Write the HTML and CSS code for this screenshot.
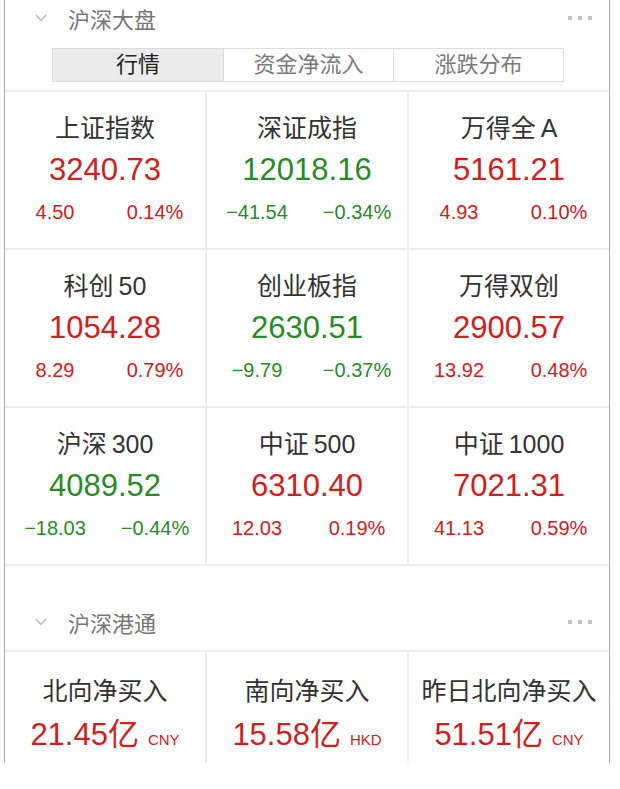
FILE: index.html
```html
<!DOCTYPE html>
<html lang="zh-CN">

<head>
    <meta charset="UTF-8">
    <meta name="viewport" content="width=device-width, initial-scale=1.0">
    <title>沪深大盘</title>
    <link rel="stylesheet" href="styles.css">
</head>

<body>

    <div class="page">
        <div class="panel">

            <!-- 沪深大盘 -->
            <div class="panel-head">
                <svg class="chevron" width="12" height="8" viewBox="0 0 12 8">
                    <path d="M1 1 L6 6.5 L11 1" fill="none" stroke="#b5b5b5" stroke-width="1.3" />
                </svg>
                <span class="panel-title">沪深大盘</span>
                <span class="more"><i></i><i></i><i></i></span>
            </div>

            <div class="tabs">
                <div class="tab active">行情</div>
                <div class="tab">资金净流入</div>
                <div class="tab">涨跌分布</div>
            </div>

            <div class="grid">
                <div class="cell">
                    <div class="name">上证指数</div>
                    <div class="value up">3240.73</div>
                    <div class="change up"><span>4.50</span><span>0.14%</span></div>
                </div>
                <div class="cell">
                    <div class="name">深证成指</div>
                    <div class="value down">12018.16</div>
                    <div class="change down"><span>−41.54</span><span>−0.34%</span></div>
                </div>
                <div class="cell">
                    <div class="name">万得全&thinsp;A</div>
                    <div class="value up">5161.21</div>
                    <div class="change up"><span>4.93</span><span>0.10%</span></div>
                </div>
                <div class="cell">
                    <div class="name">科创&thinsp;50</div>
                    <div class="value up">1054.28</div>
                    <div class="change up"><span>8.29</span><span>0.79%</span></div>
                </div>
                <div class="cell">
                    <div class="name">创业板指</div>
                    <div class="value down">2630.51</div>
                    <div class="change down"><span>−9.79</span><span>−0.37%</span></div>
                </div>
                <div class="cell">
                    <div class="name">万得双创</div>
                    <div class="value up">2900.57</div>
                    <div class="change up"><span>13.92</span><span>0.48%</span></div>
                </div>
                <div class="cell">
                    <div class="name">沪深&thinsp;300</div>
                    <div class="value down">4089.52</div>
                    <div class="change down"><span>−18.03</span><span>−0.44%</span></div>
                </div>
                <div class="cell">
                    <div class="name">中证&thinsp;500</div>
                    <div class="value up">6310.40</div>
                    <div class="change up"><span>12.03</span><span>0.19%</span></div>
                </div>
                <div class="cell">
                    <div class="name">中证&thinsp;1000</div>
                    <div class="value up">7021.31</div>
                    <div class="change up"><span>41.13</span><span>0.59%</span></div>
                </div>
            </div>

            <!-- 沪深港通 -->
            <div class="panel-head second">
                <svg class="chevron" width="12" height="8" viewBox="0 0 12 8">
                    <path d="M1 1 L6 6.5 L11 1" fill="none" stroke="#b5b5b5" stroke-width="1.3" />
                </svg>
                <span class="panel-title">沪深港通</span>
                <span class="more"><i></i><i></i><i></i></span>
            </div>

            <div class="grid flow">
                <div class="cell">
                    <div class="name">北向净买入</div>
                    <div class="value up">21.45亿<small>CNY</small></div>
                </div>
                <div class="cell">
                    <div class="name">南向净买入</div>
                    <div class="value up">15.58亿<small>HKD</small></div>
                </div>
                <div class="cell">
                    <div class="name">昨日北向净买入</div>
                    <div class="value up">51.51亿<small>CNY</small></div>
                </div>
            </div>

        </div>
    </div>

</body>

</html>
```

FILE: styles.css
```css
body {
    margin: 0;
    background-color: #fff;
    font-family: "Liberation Sans", "Noto Sans CJK SC", sans-serif;
    color: #333;
}

.page {
    height: 763px;
    overflow: hidden;
}

.panel {
    margin-left: 4px;
    width: 604px;
    height: 100%;
    border-left: 1px solid #a9a9a9;
    border-right: 1px solid #a9a9a9;
}

.panel-head {
    display: flex;
    align-items: center;
    height: 36px;
    padding: 0 17px 0 30px;
}

.panel-head.second {
    padding-top: 38px;
    padding-bottom: 10px;
}

.chevron {
    flex: none;
}

.panel-title {
    margin-left: 21px;
    font-size: 22px;
    color: #777;
}

.more {
    margin-left: auto;
    display: flex;
    gap: 6px;
}

.more i {
    width: 4px;
    height: 4px;
    background-color: #c4c4c4;
}

/* Tabs */
.tabs {
    display: grid;
    grid-template-columns: repeat(3, 1fr);
    width: 510px;
    margin: 12px 0 8px 47px;
    border: 1px solid #dcdcdc;
}

.tab {
    height: 32px;
    line-height: 32px;
    text-align: center;
    font-size: 22px;
    color: #7a7a7a;
}

.tab + .tab {
    border-left: 1px solid #dcdcdc;
}

.tab.active {
    background-color: #ececec;
    color: #222;
}

/* Grid */
.grid {
    display: grid;
    grid-template-columns: repeat(3, 1fr);
    grid-auto-rows: 156px;
    gap: 2px;
    background-color: #ececec;
    border-top: 2px solid #ececec;
    border-bottom: 2px solid #ececec;
}

.cell {
    background-color: #fff;
    padding-top: 20px;
    text-align: center;
}

.flow .cell {
    padding-top: 23px;
}

.name {
    line-height: 32px;
    font-size: 25px;
    color: #333;
    white-space: nowrap;
}

.value {
    line-height: 52px;
    font-size: 31px;
}

.flow .value {
    line-height: 56px;
}

.value small {
    margin-left: 9px;
    font-size: 15px;
}

.change {
    display: grid;
    grid-template-columns: 1fr 1fr;
    line-height: 32px;
    font-size: 20px;
}

.up {
    color: #cf2020;
}

.down {
    color: #288a28;
}
```
